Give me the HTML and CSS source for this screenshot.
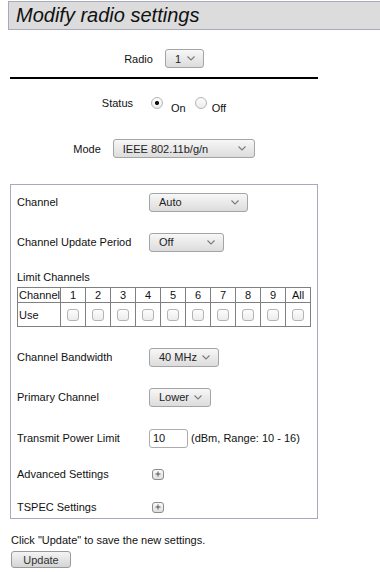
FILE: index.html
```html
<!DOCTYPE html>
<html lang="en">

<head>
    <meta charset="UTF-8">
    <meta name="viewport" content="width=device-width, initial-scale=1.0">
    <title>Modify radio settings</title>
    <link rel="stylesheet" href="styles.css">
</head>

<body>
    <h1 class="page-title">Modify radio settings</h1>

    <div class="main">
        <!-- Radio picker -->
        <div class="center-row radio-row">
            <span class="label">Radio</span>
            <div class="dropdown dd-radio">
                <span>1</span>
                <svg class="chev" width="8" height="5" viewBox="0 0 8 5"><polyline points="0.5,0.5 4,4 7.5,0.5" fill="none" stroke="#7a7a7a" stroke-width="1.1"/></svg>
            </div>
        </div>

        <div class="divider"></div>

        <div class="center-row status-row">
            <span class="label">Status</span>
            <label class="radio-opt opt-on"><input type="radio" name="status" checked><span>On</span></label>
            <label class="radio-opt opt-off"><input type="radio" name="status"><span>Off</span></label>
        </div>

        <div class="center-row mode-row">
            <span class="label">Mode</span>
            <div class="dropdown dd-mode">
                <span>IEEE 802.11b/g/n</span>
                <svg class="chev" width="8" height="5" viewBox="0 0 8 5"><polyline points="0.5,0.5 4,4 7.5,0.5" fill="none" stroke="#7a7a7a" stroke-width="1.1"/></svg>
            </div>
        </div>

        <!-- Channel settings -->
        <div class="settings-box">
            <div class="field f-channel">
                <span class="field-label">Channel</span>
                <div class="dropdown dd-channel">
                    <span>Auto</span>
                    <svg class="chev" width="8" height="5" viewBox="0 0 8 5"><polyline points="0.5,0.5 4,4 7.5,0.5" fill="none" stroke="#7a7a7a" stroke-width="1.1"/></svg>
                </div>
            </div>

            <div class="field f-period">
                <span class="field-label">Channel Update Period</span>
                <div class="dropdown dd-period">
                    <span>Off</span>
                    <svg class="chev" width="8" height="5" viewBox="0 0 8 5"><polyline points="0.5,0.5 4,4 7.5,0.5" fill="none" stroke="#7a7a7a" stroke-width="1.1"/></svg>
                </div>
            </div>

            <div class="limit-title">Limit Channels</div>
            <table class="chan-table">
                <colgroup>
                    <col class="col-name">
                    <col span="10" class="col-num">
                </colgroup>
                <tr class="head-row">
                    <td class="row-name">Channel</td>
                    <td>1</td><td>2</td><td>3</td><td>4</td><td>5</td>
                    <td>6</td><td>7</td><td>8</td><td>9</td><td>All</td>
                </tr>
                <tr class="use-row">
                    <td class="row-name">Use</td>
                    <td><input type="checkbox"></td><td><input type="checkbox"></td>
                    <td><input type="checkbox"></td><td><input type="checkbox"></td>
                    <td><input type="checkbox"></td><td><input type="checkbox"></td>
                    <td><input type="checkbox"></td><td><input type="checkbox"></td>
                    <td><input type="checkbox"></td><td><input type="checkbox"></td>
                </tr>
            </table>

            <div class="field f-bandwidth">
                <span class="field-label">Channel Bandwidth</span>
                <div class="dropdown dd-bandwidth">
                    <span>40 MHz</span>
                    <svg class="chev" width="8" height="5" viewBox="0 0 8 5"><polyline points="0.5,0.5 4,4 7.5,0.5" fill="none" stroke="#7a7a7a" stroke-width="1.1"/></svg>
                </div>
            </div>

            <div class="field f-primary">
                <span class="field-label">Primary Channel</span>
                <div class="dropdown dd-primary">
                    <span>Lower</span>
                    <svg class="chev" width="8" height="5" viewBox="0 0 8 5"><polyline points="0.5,0.5 4,4 7.5,0.5" fill="none" stroke="#7a7a7a" stroke-width="1.1"/></svg>
                </div>
            </div>

            <div class="field f-power">
                <span class="field-label">Transmit Power Limit</span>
                <input class="text-input" type="text" value="10">
                <span class="range-note">(dBm, Range: 10 - 16)</span>
            </div>

            <div class="field f-advanced">
                <span class="field-label">Advanced Settings</span>
                <button class="expand-btn"><svg width="6" height="6" viewBox="0 0 6 6"><path d="M3 0.5v5M0.5 3h5" stroke="#555" stroke-width="1"/></svg></button>
            </div>

            <div class="field f-tspec">
                <span class="field-label">TSPEC Settings</span>
                <button class="expand-btn"><svg width="6" height="6" viewBox="0 0 6 6"><path d="M3 0.5v5M0.5 3h5" stroke="#555" stroke-width="1"/></svg></button>
            </div>
        </div>

        <p class="hint">Click "Update" to save the new settings.</p>
        <button class="update-btn">Update</button>
    </div>
</body>

</html>
```

FILE: styles.css
```css
body {
    font-family: "Liberation Sans", Arial, sans-serif;
    font-size: 11px;
    color: #111;
    background-color: white;
    margin: 1px 0 0 8px;
}

.page-title {
    margin: 0;
    height: 27px;
    line-height: 27px;
    padding-left: 7px;
    font-size: 20px;
    font-style: italic;
    font-weight: normal;
    background-color: #dcdcdc;
    border: 1px solid #a9a9bd;
    border-right: none;
}

.main {
    width: 308px;
    margin-left: 2px;
}

/* centered rows at the top */
.center-row {
    display: flex;
    justify-content: center;
    align-items: center;
    gap: 12px;
    height: 19px;
}

.radio-row {
    margin-top: 19px;
}

.divider {
    height: 2px;
    background-color: #000;
    margin-top: 9px;
}

.status-row {
    margin-top: 14px;
    gap: 0;
}

.status-row .label {
    margin-right: 18px;
}

.mode-row {
    margin-top: 27px;
}

.radio-opt {
    display: flex;
    align-items: center;
}

.radio-opt span {
    margin-top: 10px;
}

.opt-on input {
    margin: 0 8px 0 0;
}

.opt-off {
    margin-left: 9px;
}

.opt-off input {
    margin: 0 5px 0 0;
}

input[type="radio"] {
    appearance: none;
    width: 12px;
    height: 12px;
    border: 1px solid #b4b4b4;
    border-radius: 50%;
    background: linear-gradient(#fdfdfd, #ececec);
}

input[type="radio"]:checked {
    background: radial-gradient(circle at center, #111 1.6px, transparent 2.4px), linear-gradient(#fdfdfd, #ececec);
}

/* fake select boxes */
.dropdown {
    display: flex;
    justify-content: space-between;
    align-items: center;
    box-sizing: border-box;
    height: 19px;
    padding: 0 8px 0 9px;
    background: linear-gradient(#f7f7f7, #dcdcdc);
    border: 1px solid #a4a4a4;
    border-radius: 3px;
    color: #222;
}

.dd-radio { width: 39px; }
.dd-mode { width: 142px; }
.dd-channel { width: 99px; }
.dd-period { width: 75px; }
.dd-bandwidth { width: 70px; }
.dd-primary { width: 62px; }

.chev {
    flex-shrink: 0;
}

/* settings box */
.settings-box {
    margin-top: 26px;
    border: 1px solid #a9a9bd;
    padding: 7px 6px 1px;
}

.field {
    display: flex;
    align-items: center;
    height: 20px;
    margin-top: 20px;
}

.f-channel {
    margin-top: 0;
}

.f-power {
    margin-top: 21px;
}

.f-advanced {
    margin-top: 16px;
}

.f-tspec {
    margin-top: 13px;
}

.field-label {
    width: 132px;
    flex-shrink: 0;
}

.limit-title {
    margin-top: 19px;
    line-height: 13px;
}

.chan-table {
    margin-top: 3px;
    border-collapse: collapse;
    table-layout: fixed;
    width: 294px;
}

.col-name { width: 43px; }
.col-num { width: 25px; }

.chan-table td {
    border: 1px solid #808080;
    padding: 0;
    text-align: center;
}

.chan-table .row-name {
    text-align: left;
    padding-left: 1px;
}

.head-row {
    height: 15px;
}

.use-row {
    height: 24px;
}

input[type="checkbox"] {
    appearance: none;
    display: block;
    margin: 1px auto 0;
    width: 12px;
    height: 12px;
    border: 1px solid #b4b4b4;
    border-radius: 3px;
    background: linear-gradient(#fdfdfd, #ececec);
}

.text-input {
    box-sizing: border-box;
    width: 39px;
    height: 19px;
    padding: 0 3px;
    font: inherit;
    color: #111;
    border: 1px solid #acacac;
    border-radius: 3px;
}

.range-note {
    margin-left: 3px;
}

.expand-btn {
    display: flex;
    align-items: center;
    justify-content: center;
    box-sizing: border-box;
    width: 12px;
    height: 11px;
    padding: 0;
    margin-left: 3px;
    background: linear-gradient(#fafafa, #dedede);
    border: 1px solid #8c8c8c;
    border-radius: 3px;
}

.hint {
    margin: 15px 0 0 1px;
    line-height: 13px;
}

.update-btn {
    display: block;
    box-sizing: border-box;
    margin: 4px 0 0 1px;
    width: 60px;
    height: 17px;
    padding: 0;
    font: inherit;
    color: #333;
    background: linear-gradient(#f4f4f4, #d4d4d4);
    border: 1px solid #9a9a9a;
    border-radius: 3px;
}
```
